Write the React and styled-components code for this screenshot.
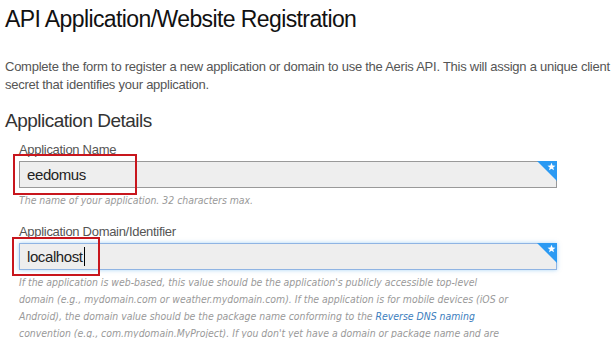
import React from "react";
import styled, { createGlobalStyle } from "styled-components";

const Global = createGlobalStyle`
  body {
    margin: 0;
    background: #fff;
    font-family: "Liberation Sans", Arial, sans-serif;
  }
`;

const Page = styled.div`
  padding: 4px 0 0 5px;
  width: 614px;
  height: 338px;
  overflow: hidden;
  box-sizing: border-box;
`;

const Title = styled.h1`
  margin: 0;
  font-size: 23px;
  font-weight: normal;
  color: #111;
  line-height: 30px;
  letter-spacing: -0.6px;
`;

const Intro = styled.p`
  margin: 24px 0 0;
  font-size: 13px;
  line-height: 18px;
  color: #555;
  letter-spacing: -0.25px;
`;

const Section = styled.h2`
  margin: 16px 0 0;
  font-size: 19px;
  font-weight: normal;
  color: #333;
  line-height: 22px;
  letter-spacing: -0.5px;
`;

const Field = styled.div`
  position: relative;
  margin: ${(p) => p.$top}px 0 0 14px;
  width: 538px;
`;

const Label = styled.div`
  font-size: 13px;
  line-height: 16px;
  color: #555;
  letter-spacing: -0.3px;
`;

const Box = styled.div`
  position: relative;
  margin-top: 3px;
  height: 27px;
  box-sizing: border-box;
  background: #eee;
  border: 1px solid ${(p) => (p.$focus ? "#8fb4e3" : "#999")};
  box-shadow: ${(p) => (p.$focus ? "0 0 4px rgba(82,168,236,0.5)" : "none")};
  padding-left: 7px;
  font-size: 15px;
  letter-spacing: -0.4px;
  line-height: 25px;
  color: #222;
`;

const Caret = styled.span`
  display: inline-block;
  width: 1px;
  height: 19px;
  margin-left: 1px;
  background: #000;
  vertical-align: -4px;
`;

const Corner = styled.svg`
  position: absolute;
  top: -1px;
  right: -1px;
`;

const Help = styled.div`
  margin-top: 4px;
  max-width: 493px;
  font-family: "DejaVu Sans Condensed", "DejaVu Sans", Verdana, sans-serif;
  font-stretch: condensed;
  font-style: italic;
  font-size: 10.4px;
  line-height: 17px;
  color: #999;
`;

const Link = styled.a`
  color: #3b7dbd;
  text-decoration: none;
`;

const Mark = styled.div`
  position: absolute;
  left: ${(p) => p.$x}px;
  top: ${(p) => p.$y}px;
  width: ${(p) => p.$w}px;
  height: ${(p) => p.$h}px;
  border: 2px solid #c8161d;
  box-sizing: border-box;
  pointer-events: none;
`;

const Required = () => (
  <Corner width="20" height="20" viewBox="0 0 20 20">
    <polygon points="0,0 20,0 20,20" fill="#2b9af3" />
    <polygon
      points="14.5,1.8 15.6,4.6 18.5,4.7 16.2,6.5 17,9.3 14.5,7.7 12,9.3 12.8,6.5 10.5,4.7 13.4,4.6"
      fill="#fff"
    />
  </Corner>
);

const App = () => {
  return (
    <Page>
      <Global />
      <Title>API Application/Website Registration</Title>
      <Intro>
        Complete the form to register a new application or domain to use the
        Aeris API. This will assign a unique client secret that identifies your
        application.
      </Intro>
      <Section>Application Details</Section>
      <Field $top={10}>
        <Label>Application Name</Label>
        <Box>
          eedomus
          <Required />
        </Box>
        <Help>The name of your application. 32 characters max.</Help>
        <Mark $x={-6} $y={12} $w={124} $h={41} />
      </Field>
      <Field $top={15}>
        <Label>Application Domain/Identifier</Label>
        <Box $focus>
          localhost
          <Caret />
          <Required />
        </Box>
        <Help>
          If the application is web-based, this value should be the
          application's publicly accessible top-level domain (e.g.,
          mydomain.com or weather.mydomain.com). If the application is for
          mobile devices (iOS or Android), the domain value should be the
          package name conforming to the <Link>Reverse DNS naming</Link>{" "}
          convention (e.g., com.mydomain.MyProject). If you don't yet have a
          domain or package name and are
        </Help>
        <Mark $x={-7} $y={13} $w={88} $h={39} />
      </Field>
    </Page>
  );
};

export default App;
